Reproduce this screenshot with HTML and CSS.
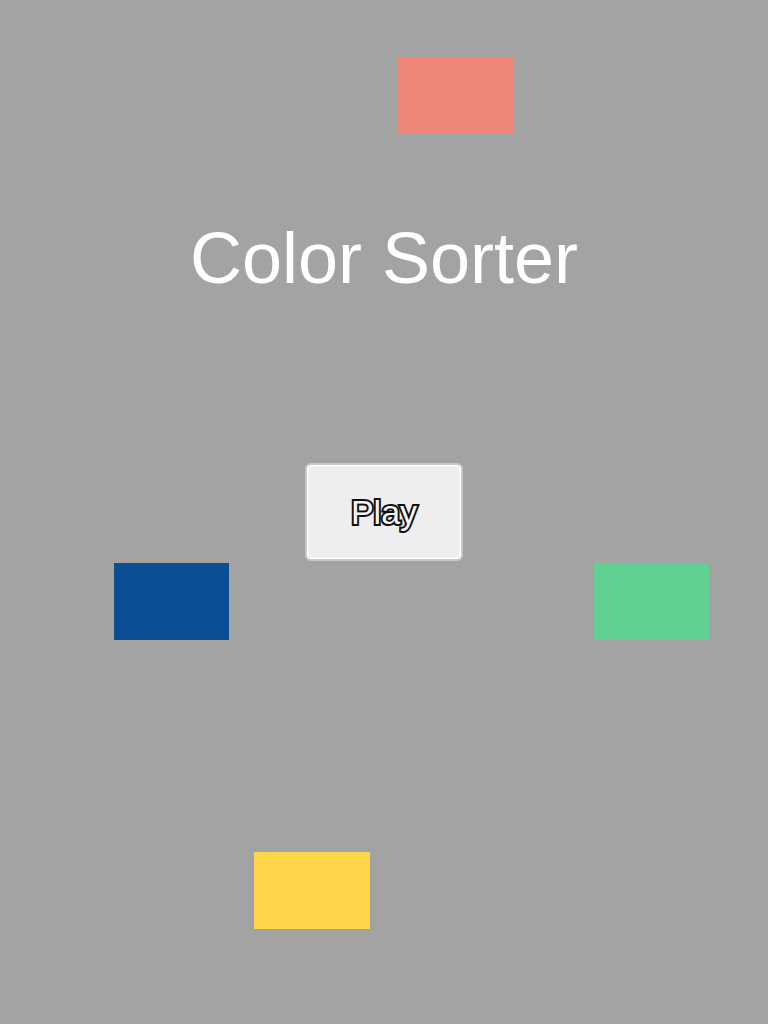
FILE: index.html
```html
<!DOCTYPE html>
<html lang="en">
<head>
<meta charset="utf-8">
<title>Color Sorter</title>
<link rel="stylesheet" href="styles.css">
</head>
<body>
<main class="stage">
  <h1 class="title">Color Sorter</h1>
  <button class="play" type="button">Play</button>
  <div class="tile tile-salmon"></div>
  <div class="tile tile-blue"></div>
  <div class="tile tile-green"></div>
  <div class="tile tile-yellow"></div>
</main>
</body>
</html>
```
FILE: styles.css
```css
html, body {
  margin: 0;
  padding: 0;
}
body {
  background: #a3a3a3;
  font-family: "Liberation Sans", Arial, sans-serif;
}
.stage {
  position: relative;
  width: 768px;
  height: 1024px;
  display: flex;
  flex-direction: column;
  align-items: center;
  overflow: hidden;
}
.title {
  margin: 218px 0 0 0;
  font-size: 72px;
  line-height: 80px;
  font-weight: normal;
  color: #ffffff;
}
.play {
  margin-top: 165px;
  width: 158px;
  height: 98px;
  box-sizing: border-box;
  border: 2px solid #c9c9c9;
  border-radius: 6px;
  background: #eeeeee;
  box-shadow: inset 0 0 0 1.5px #ffffff;
  font-family: "Liberation Sans", Arial, sans-serif;
  font-size: 34px;
  color: #f4f4f4;
  -webkit-text-stroke: 4px #111111;
  paint-order: stroke fill;
  padding: 0;
  display: flex;
  align-items: center;
  justify-content: center;
}
.tile {
  position: absolute;
  width: 116px;
  height: 77px;
}
.tile-salmon { left: 398px; top: 57px; background: #ef8576; }
.tile-blue { left: 114px; top: 563px; width: 115px; background: #0a4f93; }
.tile-green { left: 594px; top: 563px; width: 115px; background: #61d193; }
.tile-yellow { left: 254px; top: 852px; background: #ffd54b; }
```
